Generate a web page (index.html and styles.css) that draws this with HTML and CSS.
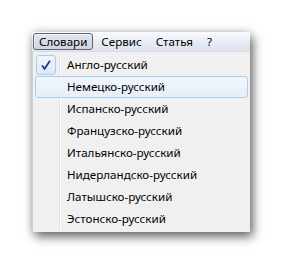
FILE: index.html
```html
<!DOCTYPE html>
<html lang="ru">
<head>
    <meta charset="UTF-8">
    <title>Словари</title>
    <link rel="stylesheet" href="styles.css">
</head>
<body>
    <div class="window">
        <div class="menubar">
            <span class="menu-title open">Словари</span>
            <span class="menu-title">Сервис</span>
            <span class="menu-title">Статья</span>
            <span class="menu-title help">?</span>
        </div>
        <div class="popup">
            <div class="item">
                <span class="check">
                    <svg width="12" height="12" viewBox="0 0 12 12"><path d="M2 6.5 L4.6 9.8 L10 1.8" fill="none" stroke="#1c2a8c" stroke-width="1.6"/></svg>
                </span>
                <span class="label">Англо-русский</span>
            </div>
            <div class="item hover"><span class="label">Немецко-русский</span></div>
            <div class="item"><span class="label">Испанско-русский</span></div>
            <div class="item"><span class="label">Французско-русский</span></div>
            <div class="item"><span class="label">Итальянско-русский</span></div>
            <div class="item"><span class="label">Нидерландско-русский</span></div>
            <div class="item"><span class="label">Латышско-русский</span></div>
            <div class="item"><span class="label">Эстонско-русский</span></div>
        </div>
    </div>
</body>
</html>
```

FILE: styles.css
```css
html, body {
    height: 100%;
}

body {
    margin: 0;
    padding: 32px 0 0 32px;
    box-sizing: border-box;
    background-color: #ffffff;
    font-family: 'Noto Sans', 'Open Sans', sans-serif;
    font-size: 11.6px;
    color: #000;
}

.window {
    width: 218px;
    box-shadow: 3px 5px 10px rgba(0, 0, 0, 0.55), 0 0 8px rgba(0, 0, 0, 0.18);
}

.menubar {
    height: 19px;
    display: flex;
    align-items: center;
    padding-left: 1px;
    background: linear-gradient(#fbfcfe, #e6ebf4 55%, #dce3ee);
    border-bottom: 1px solid #d8dde6;
}

.menu-title {
    padding: 0 5px;
    margin-right: 2px;
    height: 17px;
    line-height: 15px;
    box-sizing: border-box;
    border: 1px solid transparent;
    border-radius: 3px;
}

.menu-title.open {
    border-color: #5f6470;
    background: linear-gradient(#e2e6ee, #cfd5df);
    box-shadow: inset 1px 1px 0 rgba(255, 255, 255, 0.6);
}

.popup {
    background-color: #f0f0f0;
    border-left: 1px solid #cfcfcf;
    padding: 2px;
    position: relative;
}

/* gutter line */
.popup::before {
    content: "";
    position: absolute;
    top: 2px;
    bottom: 2px;
    left: 26px;
    width: 1px;
    background: #e2e3e3;
    box-shadow: 1px 0 0 #ffffff;
}

.item {
    height: 22px;
    display: flex;
    align-items: center;
    position: relative;
    box-sizing: border-box;
    border: 1px solid transparent;
    border-radius: 3px;
}

.item.hover {
    border-color: #a8d0f5;
    background: linear-gradient(#f2f6fb, #e6eef8);
}

.check {
    position: absolute;
    left: 0;
    top: 0;
    width: 20px;
    height: 20px;
    box-sizing: border-box;
    border: 1px solid #a9cbf0;
    border-radius: 3px;
    background: linear-gradient(#eef4fc, #dce8f7);
    display: flex;
    align-items: center;
    justify-content: center;
}

.label {
    padding-left: 31px;
    line-height: 20px;
}
```
